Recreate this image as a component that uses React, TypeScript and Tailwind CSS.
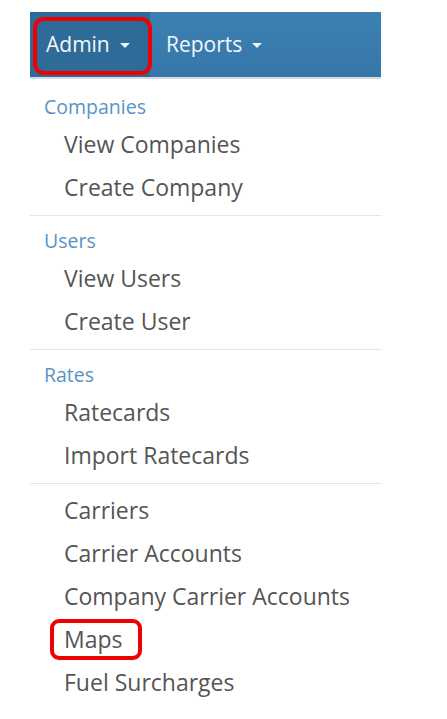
import { Fragment } from 'react';

type Section = {
  header?: string;
  items: string[];
};

const sections: Section[] = [
  { header: 'Companies', items: ['View Companies', 'Create Company'] },
  { header: 'Users', items: ['View Users', 'Create User'] },
  { header: 'Rates', items: ['Ratecards', 'Import Ratecards'] },
  { items: ['Carriers', 'Carrier Accounts', 'Company Carrier Accounts', 'Maps', 'Fuel Surcharges'] },
];

function Caret() {
  return <span className="ml-[10px] inline-block w-0 h-0 border-x-[5px] border-x-transparent border-t-[5px] border-t-[#eef3f8] translate-y-[1px]" />;
}

export default function App() {
  return (
    <div className="relative w-[447px] h-[719px] bg-white font-['Open_Sans',sans-serif] overflow-hidden">
      <div className="ml-[30px] pt-[12px] w-[351px]">
        {/* Navbar */}
        <nav className="flex h-[65px] bg-gradient-to-b from-[#3c80b2] to-[#3677a9] border-b-2 border-[#d5dbe0] box-content">
          <div className="relative flex items-center w-[120px] pl-[16px] bg-[#2f6b98] text-[#f4f7fa] text-[21px]">
            Admin
            <Caret />
            {/* highlight */}
            <div className="absolute left-[3px] top-[5px] w-[119px] h-[58px] border-[4px] border-[#f00000] rounded-[11px]" />
          </div>
          <div className="flex items-center pl-[16px] text-[#f4f7fa] text-[21px]">
            Reports
            <Caret />
          </div>
        </nav>

        {/* Dropdown */}
        <div className="pt-[11px]">
          {sections.map((s, i) => (
            <Fragment key={i}>
              {i > 0 && <div className={`h-px bg-[#e5e5e5] mt-[6px] ${s.header ? 'mb-[8px]' : 'mb-[5px]'}`} />}
              {s.header && (
                <div className="h-[33px] leading-[33px] pl-[14px] text-[19.5px] text-[#5893c4]">{s.header}</div>
              )}
              {s.items.map((it) => (
                <div key={it} className="relative h-[43px] leading-[43px] pl-[34px] text-[23px] text-[#555555]">
                  {it}
                  {it === 'Maps' && (
                    <div className="absolute left-[20px] top-[1px] w-[92px] h-[41px] border-[4px] border-[#f00000] rounded-[9px]" />
                  )}
                </div>
              ))}
            </Fragment>
          ))}
        </div>
      </div>
    </div>
  );
}
